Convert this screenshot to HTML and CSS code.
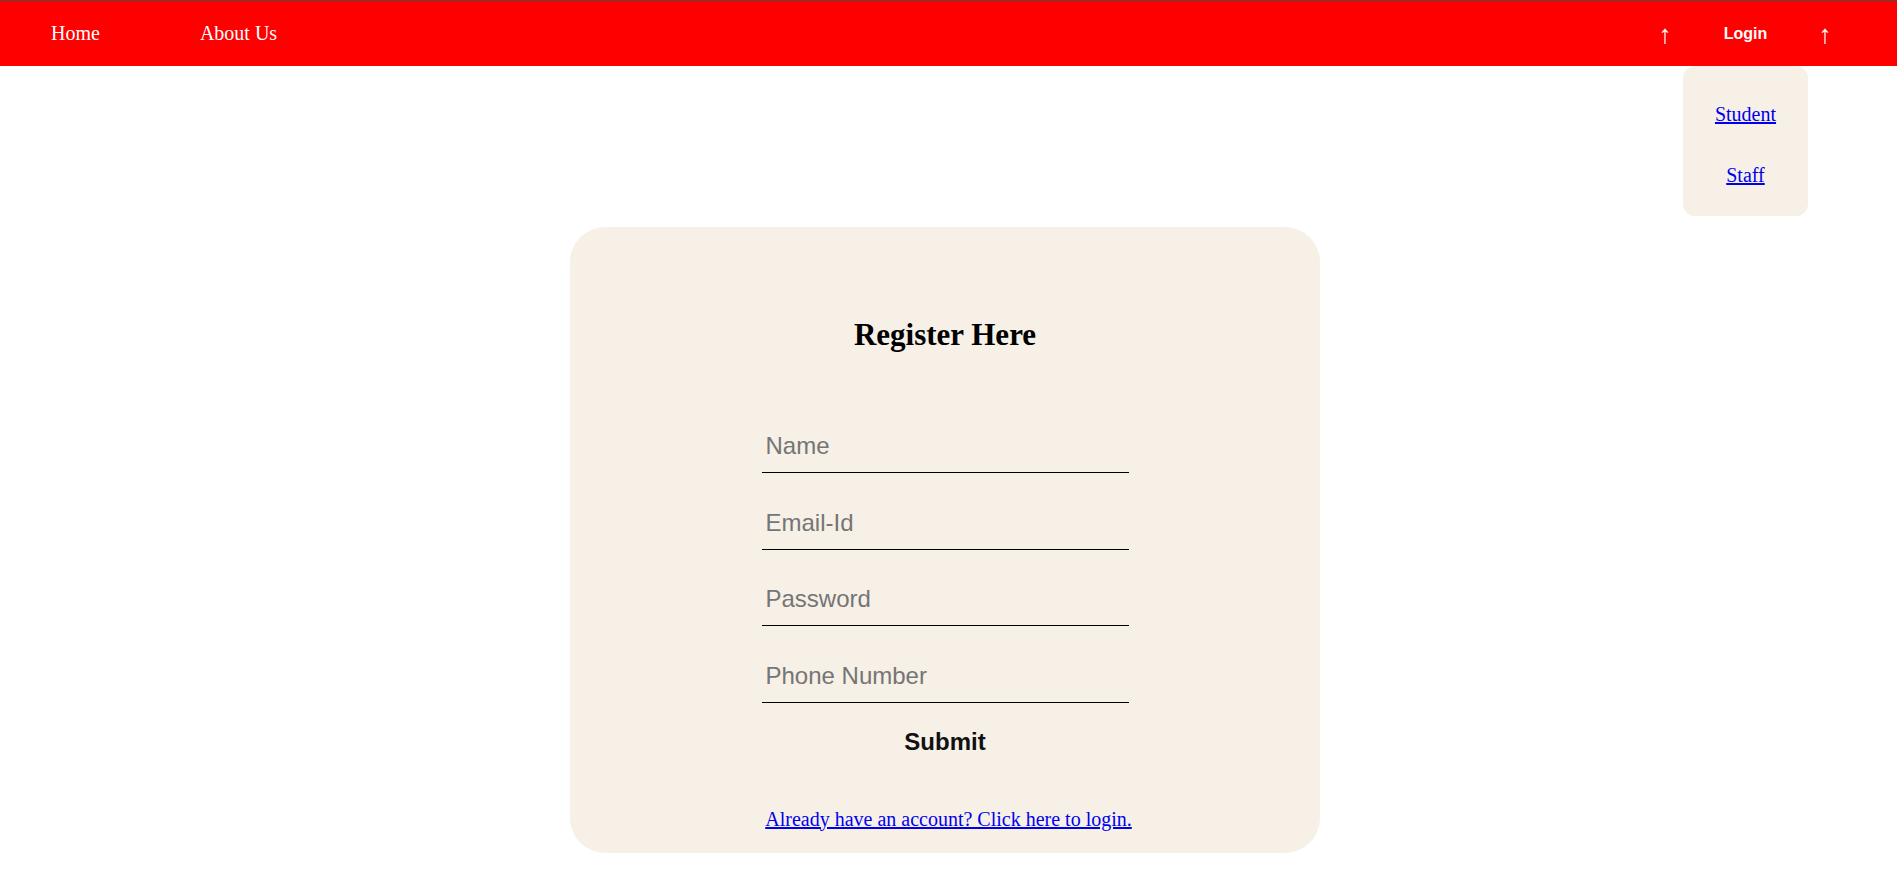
FILE: index.html
```html
<!DOCTYPE html>
<html lang="en">
<head>
<meta charset="utf-8">
<title>Register</title>
<link rel="stylesheet" href="styles.css">
</head>
<body>
<nav class="navbar">
  <ul class="nav-left">
    <li><a href="#" class="nav-link">Home</a></li>
    <li><a href="#" class="nav-link">About Us</a></li>
  </ul>
  <ul class="nav-right">
    <li class="arrow">↑</li>
    <li class="login">
      <span class="login-label">Login</span>
      <div class="dropdown">
        <a href="#">Student</a>
        <a href="#">Staff</a>
      </div>
    </li>
    <li class="arrow">↑</li>
  </ul>
</nav>

<main class="page">
  <form class="card">
    <h2 class="title">Register Here</h2>
    <div class="fields">
      <input class="field" type="text" placeholder="Name">
      <input class="field" type="email" placeholder="Email-Id">
      <input class="field" type="password" placeholder="Password">
      <input class="field" type="tel" placeholder="Phone Number">
    </div>
    <button class="submit" type="button">Submit</button>
    <p class="switch"><a href="#">Already have an account? Click here to login.</a></p>
  </form>
</main>
</body>
</html>
```

FILE: styles.css
```css
html, body {
  margin: 0;
  padding: 0;
  background: #ffffff;
}

body {
  font-family: "Liberation Serif", "Times New Roman", serif;
  border-top: 1px solid #4a4a4a;
}

.navbar {
  position: relative;
  height: 65px;
  background: #ff0000;
  display: flex;
  justify-content: space-between;
  align-items: stretch;
}

.nav-left,
.nav-right {
  list-style: none;
  margin: 0;
  padding: 0;
  display: flex;
  align-items: stretch;
}

.nav-left {
  padding-left: 51px;
  gap: 100px;
}

.nav-left li,
.nav-right li {
  display: flex;
  align-items: center;
}

.nav-link {
  color: #ffffff;
  text-decoration: none;
  font-size: 20px;
}

.nav-right {
  padding-right: 64px;
}

.arrow {
  color: #ffffff;
  font-family: "Liberation Sans", Arial, sans-serif;
  font-size: 26px;
  width: 16px;
  justify-content: center;
  padding-top: 2px;
}

.login {
  position: relative;
  width: 125px;
  margin: 0 9px 0 10px;
  justify-content: center;
}

.login-label {
  color: #ffffff;
  font-family: "Liberation Sans", Arial, sans-serif;
  font-weight: bold;
  font-size: 16px;
}

.dropdown {
  position: absolute;
  top: 100%;
  left: 0;
  width: 125px;
  box-sizing: border-box;
  padding: 37px 0 29px;
  background: #f6f0e7;
  border-radius: 12px;
  display: flex;
  flex-direction: column;
  align-items: center;
  gap: 38px;
  z-index: 10;
}

.dropdown a {
  color: #0000ee;
  font-size: 20px;
  line-height: 23px;
}

.page {
  padding-top: 161px;
}

.card {
  box-sizing: border-box;
  width: 750px;
  height: 626px;
  margin-left: 570px;
  padding-top: 90px;
  background: #f6f0e7;
  border-radius: 35px;
  display: flex;
  flex-direction: column;
  align-items: center;
}

.title {
  margin: 0;
  font-size: 31px;
  line-height: 36px;
  font-weight: bold;
  color: #000000;
}

.fields {
  margin-top: 67px;
  display: flex;
  flex-direction: column;
  gap: 23.67px;
}

.field {
  box-sizing: border-box;
  width: 367px;
  height: 53px;
  padding: 0 4px;
  margin: 0;
  border: none;
  border-bottom: 1px solid #000000;
  background: transparent;
  outline: none;
  font-family: "Liberation Sans", Arial, sans-serif;
  font-size: 24px;
  color: #000000;
}

.field::placeholder {
  color: #757575;
}

.submit {
  margin-top: 25px;
  padding: 0;
  border: none;
  background: transparent;
  font-family: "Liberation Sans", Arial, sans-serif;
  font-weight: bold;
  font-size: 24px;
  line-height: 27.6px;
  color: #111111;
}

.switch {
  margin: 52px 0 0;
  padding-left: 7px;
  font-size: 20px;
  line-height: 23px;
}

.switch a {
  color: #0000ee;
}
```
